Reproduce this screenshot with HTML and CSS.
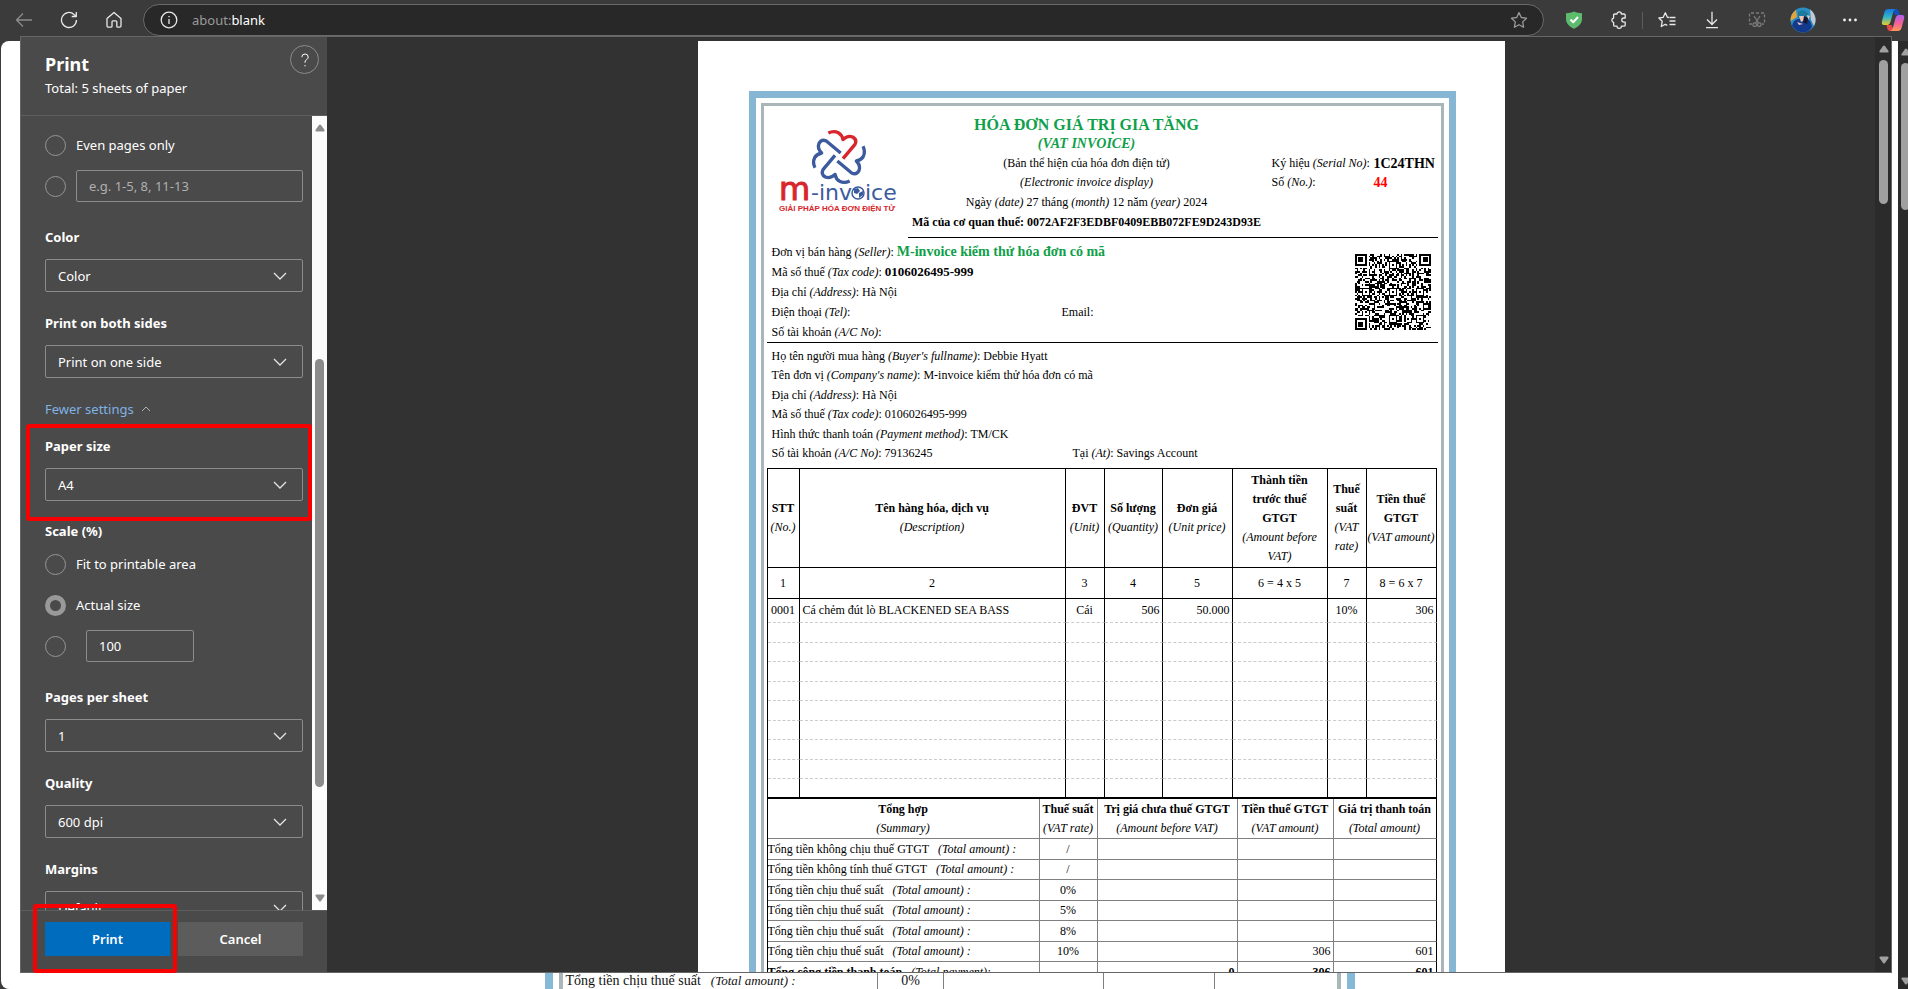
FILE: index.html
```html
<!DOCTYPE html>
<html lang="en">
<head>
<meta charset="utf-8">
<title>about:blank</title>
<link rel="stylesheet" href="styles.css">
</head>
<body>
<header class="toolbar">
  <button class="tool dim" aria-label="Back"><svg width="18" height="16" viewBox="0 0 18 16"><path d="M17 8H1.500M8 1.500 1.500 8 8 14.500"/></svg></button>
  <button class="tool" aria-label="Refresh"><svg width="18" height="18" viewBox="0 0 18 18"><path d="M16.500 9A7.500 7.500 0 1 1 14 3.400L16 5M16.300 1v4.500h-4.600"/></svg></button>
  <button class="tool" aria-label="Home"><svg width="18" height="18" viewBox="0 0 18 18"><path d="M2 7.600 9 1.500l7 6.100v7.200q0 1.400-1.400 1.400h-1.800q-1 0-1-1v-4.400q0-1-1-1H8q-1 0-1 1v4.400q0 1-1 1H3.400Q2 16.200 2 14.800z"/></svg></button>
  <div class="address">
    <svg width="18" height="18" viewBox="0 0 18 18"><circle cx="9" cy="9" r="7.800"/><path d="M9 8v5M9 5v1.200"/></svg>
    <span class="url"><span class="scheme">about:</span>blank</span>
    <button class="star" aria-label="Add to favorites"><svg width="18" height="18" viewBox="0 0 18 18"><path d="m9 1.500 2.300 5 5.200.700-3.800 3.700.900 5.300L9 13.700l-4.600 2.500.900-5.300L1.500 7.200l5.200-.700z"/></svg></button>
  </div>
  <button class="tool" aria-label="Protection"><svg width="18" height="18" viewBox="0 0 18 18"><path class="shield" d="M9 .500C6.500 1.600 4 2 1 2.300V8c0 4.500 3.500 7.700 8 9.700 4.500-2 8-5.200 8-9.700V2.300C14 2 11.500 1.600 9 .500z"/><path class="tick" d="m5.500 8.500 2.700 2.700L13 6"/></svg></button>
  <button class="tool" aria-label="Extensions"><svg width="18" height="18" viewBox="0 0 18 18"><path d="M4.800 3H7a2.200 2.200 0 0 1 4.400 0H14q1.200 0 1.200 1.200V7h-1.300a2 2 0 0 0 0 4.200h1.300V14q0 1.200-1.200 1.200h-2.600a2.200 2.200 0 0 1-4.400 0H4.800q-1.200 0-1.200-1.200v-2.700a2.200 2.200 0 0 1 0-4.300V4.200Q3.600 3 4.800 3z"/></svg></button>
  <span class="divider"></span>
  <button class="tool" aria-label="Favorites"><svg width="18" height="18" viewBox="0 0 18 18"><path d="M11 6.500 9.400 6.300 7.300 1.800 5.200 6.300.9 7l3.300 3.300-.9 5.200 4-2.200 2 1M11.500 6.500h6M11.500 10h6M11.500 13.500h6"/></svg></button>
  <button class="tool" aria-label="Downloads"><svg width="18" height="18" viewBox="0 0 18 18"><path d="M9 .800v12.400M4 8.500l5 5 5-5M3 16.700h12"/></svg></button>
  <button class="tool faint" aria-label="Screenshot"><svg width="18" height="18" viewBox="0 0 18 18"><path stroke-dasharray="3 2" d="M4 13H1.500V2h15v11H14"/><path d="m6 5 4.500 7M12 5l-4.500 7"/><circle cx="6.700" cy="13.700" r="1.800"/><circle cx="11.300" cy="13.700" r="1.800"/></svg></button>
  <button class="tool profile" aria-label="Profile"><svg width="26" height="26" viewBox="0 0 26 26"><circle class="av-bg" cx="13" cy="13" r="12.500"/><path class="av-amber" d="M.600 14A12.500 12.500 0 0 1 6 3l1 7z"/><path class="av-grey" d="M20 2.600A12.500 12.500 0 0 1 24 19l-3-6z"/><path class="av-coat" d="M2 19q1-6 6-7l8-1q5 2 6 9-3.500 5.500-9 5.500T2 19z"/><path class="av-hair" d="M8 5q5-4 10 1l1 4-11 1z"/><path class="av-skin" d="M9 9h5l1 4-4 2zM7 15l6 2-4 1zM17 8l3 1-2 4z"/><path class="av-dark" d="M14 9l4 2-1 6-4-2z"/></svg></button>
  <button class="tool" aria-label="Settings and more"><svg width="18" height="18" viewBox="0 0 18 18"><g class="dots"><circle cx="3.500" cy="9" r="1.400"/><circle cx="9" cy="9" r="1.400"/><circle cx="14.500" cy="9" r="1.400"/></g></svg></button>
  <button class="tool copilot" aria-label="Copilot"><svg width="24" height="24" viewBox="0 0 24 24">
    <defs>
      <linearGradient id="cpA" x1="0" y1="0" x2="0" y2="1"><stop offset="0" stop-color="#1878e0"/><stop offset=".5" stop-color="#2fb5c8"/><stop offset="1" stop-color="#e8cf2a"/></linearGradient>
      <linearGradient id="cpB" x1="0" y1="0" x2="0" y2="1"><stop offset="0" stop-color="#b060f0"/><stop offset=".5" stop-color="#f0609a"/><stop offset="1" stop-color="#ff9858"/></linearGradient>
    </defs>
    <path fill="#1450b8" d="M11 1h4q2 0 2.700 2l1.300 4h-5z"/>
    <path fill="url(#cpA)" d="M7 1h8q-2 0-2.800 3L10 12q-1 5-4 5H3q-3 0-2-4L3.500 4Q4.500 1 7 1z"/>
    <path fill="#e84848" d="M13 23H9q-2 0-2.600-2L5.500 17h5z"/>
    <path fill="url(#cpB)" d="M17 23H9q2 0 2.800-3L14 12q1-5 4-5h3q3 0 2 4l-2.500 9q-1 3-3.500 3z"/>
  </svg></button>
</header>

<main class="viewport">
  <div class="backpage">
    <div class="backdoc">
      <table class="backtable">
        <colgroup><col class="b1"><col class="b2"><col class="b3"><col class="b4"><col></colgroup>
        <tr><td>Tổng tiền chịu thuế suất <i>&nbsp;&nbsp;(Total amount) :</i></td><td class="mid">0%</td><td></td><td></td><td></td></tr>
      </table>
    </div>
  </div>
  <div class="scrollbar page-scroll">
    <svg width="10" height="8" viewBox="0 0 10 8"><path d="M4 1q1-1 2 0l3.500 5q.5 1.500-1 1.500h-7Q0 7.500.5 6z"/></svg>
    <span class="thumb"></span>
    <svg class="end" width="10" height="8" viewBox="0 0 10 8"><path d="M4 7q1 1 2 0l3.500-5Q10 .500 8.500.500h-7Q0 .500.500 2z"/></svg>
  </div>
</main>

<div class="dialog" role="dialog" aria-label="Print">
  <form class="sidebar">
    <div class="side-head">
      <div><h1>Print</h1><p>Total: 5 sheets of paper</p></div>
      <button type="button" class="help" aria-label="Help"><svg width="10" height="14" viewBox="0 0 10 14"><path d="M1.800 4.200Q1.800 1 5 1t3.200 3q0 1.500-1.700 2.700T5 9.300v.5M5 12v1.300"/></svg></button>
    </div>
    <div class="side-main">
      <div class="settings">
        <div class="choices">
          <div class="choice"><input type="radio" name="pages" id="even"><label for="even">Even pages only</label></div>
          <div class="choice"><input type="radio" name="pages" id="range" aria-label="Page range"><input class="box grow" type="text" aria-label="Pages" placeholder="e.g. 1-5, 8, 11-13"></div>
        </div>
        <div class="field after-choices"><label for="color">Color</label>
          <div class="pick"><select id="color"><option>Color</option></select><svg width="14" height="8" viewBox="0 0 14 8"><path d="m1 1 6 6 6-6"/></svg></div></div>
        <div class="field"><label for="sides">Print on both sides</label>
          <div class="pick"><select id="sides"><option>Print on one side</option></select><svg width="14" height="8" viewBox="0 0 14 8"><path d="m1 1 6 6 6-6"/></svg></div></div>
        <button type="button" class="fewer">Fewer settings <svg width="10" height="6" viewBox="0 0 10 6"><path d="m1 5 4-4 4 4"/></svg></button>
        <div class="field paper"><label for="paper">Paper size</label>
          <div class="pick"><select id="paper"><option>A4</option></select><svg width="14" height="8" viewBox="0 0 14 8"><path d="m1 1 6 6 6-6"/></svg></div>
          <span class="mark mark-paper"></span></div>
        <fieldset class="field scale">
          <legend>Scale (%)</legend>
          <div class="choices">
            <div class="choice"><input type="radio" name="scale" id="fit"><label for="fit">Fit to printable area</label></div>
            <div class="choice"><input type="radio" name="scale" id="actual" checked><label for="actual">Actual size</label></div>
            <div class="choice"><input type="radio" name="scale" id="custom" aria-label="Custom scale"><input class="box percent" type="text" aria-label="Scale percent" value="100"></div>
          </div>
        </fieldset>
        <div class="field after-choices"><label for="pps">Pages per sheet</label>
          <div class="pick"><select id="pps"><option>1</option></select><svg width="14" height="8" viewBox="0 0 14 8"><path d="m1 1 6 6 6-6"/></svg></div></div>
        <div class="field"><label for="quality">Quality</label>
          <div class="pick"><select id="quality"><option>600 dpi</option></select><svg width="14" height="8" viewBox="0 0 14 8"><path d="m1 1 6 6 6-6"/></svg></div></div>
        <div class="field"><label for="margins">Margins</label>
          <div class="pick"><select id="margins"><option>Default</option></select><svg width="14" height="8" viewBox="0 0 14 8"><path d="m1 1 6 6 6-6"/></svg></div></div>
      </div>
      <div class="scrollbar side-scroll">
        <svg width="10" height="8" viewBox="0 0 10 8"><path d="M4 1q1-1 2 0l3.500 5q.5 1.500-1 1.500h-7Q0 7.500.5 6z"/></svg>
        <span class="thumb"></span>
        <svg class="end" width="10" height="8" viewBox="0 0 10 8"><path d="M4 7q1 1 2 0l3.500-5Q10 .500 8.500.500h-7Q0 .500.500 2z"/></svg>
      </div>
    </div>
    <div class="side-foot">
      <div class="act"><button type="button" class="primary">Print</button><span class="mark mark-print"></span></div>
      <div class="act"><button type="button">Cancel</button></div>
    </div>
  </form>

  <section class="preview">
    <article class="sheet">
      <div class="frame"><div class="frame-in">
        <div class="inv-head">
          <div class="logo">
            <svg width="122" height="84" viewBox="0 0 122 84" role="img" aria-label="m-invoice">
              <g transform="translate(60 28) scale(.3333)" fill="none" stroke-width="10" stroke-linejoin="round">
                <path stroke="#d8262c" d="M-32-72Q-16-80-2-73 9-67 12-52 26-66 41-60 55-52 48-38L12 5"/>
                <path stroke="#3c5a9e" transform="rotate(-90)" d="M-32-72Q-16-80-2-73 9-67 12-52 26-66 41-60 55-52 48-38L12 5"/>
                <path stroke="#3c5a9e" transform="rotate(180)" d="M-32-72Q-16-80-2-73 9-67 12-52 26-66 41-60 55-52 48-38L12 5"/>
                <path stroke="#3c5a9e" transform="rotate(90)" d="M-32-72Q-16-80-2-73 9-67 12-52 26-66 41-60 55-52 48-38L12 5"/>
              </g>
              <text class="lg-m" x="0" y="71">m</text>
              <text class="lg-t" x="32" y="71">-inv</text>
              <circle cx="79" cy="64" r="6" fill="#fff" stroke="#3c5a9e" stroke-width="1.500"/>
              <path fill="#3c5a9e" d="M75 60l4-1 2 3-3 3-3-1zM80 64l4-2v4l-4 3z"/>
              <text class="lg-t" x="86" y="71">ice</text>
              <text class="lg-s" x="0" y="82">GIẢI PHÁP HÓA ĐƠN ĐIỆN TỬ</text>
            </svg>
          </div>
          <div class="inv-title">
            <h2>HÓA ĐƠN GIÁ TRỊ GIA TĂNG</h2>
            <p class="sub">(VAT INVOICE)</p>
            <p>(Bản thể hiện của hóa đơn điện tử)</p>
            <p><i>(Electronic invoice display)</i></p>
            <p>Ngày <i>(date)</i> 27 tháng <i>(month)</i> 12 năm <i>(year)</i> 2024</p>
            <p class="code">Mã của cơ quan thuế: 0072AF2F3EDBF0409EBB072FE9D243D93E</p>
          </div>
          <dl class="serial">
            <dt>Ký hiệu <i>(Serial No)</i>:</dt><dd>1C24THN</dd>
            <dt>Số <i>(No.)</i>:</dt><dd class="no">44</dd>
          </dl>
        </div>
        <div class="seller">
          <div class="rows">
            <p>Đơn vị bán hàng <i>(Seller)</i>: <b class="name">M-invoice kiểm thử hóa đơn có mã</b></p>
            <p>Mã số thuế <i>(Tax code)</i>: <b class="tax">0106026495-999</b></p>
            <p>Địa chỉ <i>(Address)</i>: Hà Nội</p>
            <p class="pair"><span>Điện thoại <i>(Tel)</i>:</span><span>Email:</span></p>
            <p>Số tài khoản <i>(A/C No)</i>:</p>
          </div>
          <svg class="qr" id="qr" width="76" height="76" viewBox="0 0 45 45" shape-rendering="crispEdges" role="img" aria-label="QR code"><path id="qr-path"/></svg>
        </div>
        <div class="buyer">
          <p>Họ tên người mua hàng <i>(Buyer's fullname)</i>: Debbie Hyatt</p>
          <p>Tên đơn vị <i>(Company's name)</i>: M-invoice kiểm thử hóa đơn có mã</p>
          <p>Địa chỉ <i>(Address)</i>: Hà Nội</p>
          <p>Mã số thuế <i>(Tax code)</i>: 0106026495-999</p>
          <p>Hình thức thanh toán <i>(Payment method)</i>: TM/CK</p>
          <p class="pair at"><span>Số tài khoản <i>(A/C No)</i>: 79136245</span><span>Tại <i>(At)</i>: Savings Account</span></p>
        </div>
        <table class="items">
          <colgroup><col class="c1"><col><col class="c3"><col class="c4"><col class="c5"><col class="c6"><col class="c3"><col class="c5"></colgroup>
          <thead>
            <tr class="names"><th>STT<br><i>(No.)</i></th><th>Tên hàng hóa, dịch vụ<br><i>(Description)</i></th><th>ĐVT<br><i>(Unit)</i></th><th>Số lượng<br><i>(Quantity)</i></th><th>Đơn giá<br><i>(Unit price)</i></th><th>Thành tiền<br>trước thuế<br>GTGT<br><i>(Amount before<br>VAT)</i></th><th>Thuế<br>suất<br><i>(VAT<br>rate)</i></th><th>Tiền thuế<br>GTGT<br><i>(VAT amount)</i></th></tr>
            <tr class="nums"><td>1</td><td>2</td><td>3</td><td>4</td><td>5</td><td>6 = 4 x 5</td><td>7</td><td>8 = 6 x 7</td></tr>
          </thead>
          <tbody>
            <tr class="first"><td>0001</td><td class="left">Cá chẻm đút lò BLACKENED SEA BASS</td><td>Cái</td><td class="right">506</td><td class="right">50.000</td><td></td><td>10%</td><td class="right">306</td></tr>
            <tr><td></td><td></td><td></td><td></td><td></td><td></td><td></td><td></td></tr>
            <tr><td></td><td></td><td></td><td></td><td></td><td></td><td></td><td></td></tr>
            <tr><td></td><td></td><td></td><td></td><td></td><td></td><td></td><td></td></tr>
            <tr><td></td><td></td><td></td><td></td><td></td><td></td><td></td><td></td></tr>
            <tr><td></td><td></td><td></td><td></td><td></td><td></td><td></td><td></td></tr>
            <tr><td></td><td></td><td></td><td></td><td></td><td></td><td></td><td></td></tr>
            <tr><td></td><td></td><td></td><td></td><td></td><td></td><td></td><td></td></tr>
            <tr><td></td><td></td><td></td><td></td><td></td><td></td><td></td><td></td></tr>
            <tr class="last"><td></td><td></td><td></td><td></td><td></td><td></td><td></td><td></td></tr>
          </tbody>
        </table>
        <table class="totals">
          <colgroup><col><col class="t2"><col class="t3"><col class="t4"><col class="t5"></colgroup>
          <thead><tr><th>Tổng hợp<br><i>(Summary)</i></th><th>Thuế suất<br><i>(VAT rate)</i></th><th>Trị giá chưa thuế GTGT<br><i>(Amount before VAT)</i></th><th>Tiền thuế GTGT<br><i>(VAT amount)</i></th><th>Giá trị thanh toán<br><i>(Total amount)</i></th></tr></thead>
          <tbody>
            <tr><td>Tổng tiền không chịu thuế GTGT <i>&nbsp;&nbsp;(Total amount) :</i></td><td>/</td><td></td><td></td><td></td></tr>
            <tr><td>Tổng tiền không tính thuế GTGT <i>&nbsp;&nbsp;(Total amount) :</i></td><td>/</td><td></td><td></td><td></td></tr>
            <tr><td>Tổng tiền chịu thuế suất <i>&nbsp;&nbsp;(Total amount) :</i></td><td>0%</td><td></td><td></td><td></td></tr>
            <tr><td>Tổng tiền chịu thuế suất <i>&nbsp;&nbsp;(Total amount) :</i></td><td>5%</td><td></td><td></td><td></td></tr>
            <tr><td>Tổng tiền chịu thuế suất <i>&nbsp;&nbsp;(Total amount) :</i></td><td>8%</td><td></td><td></td><td></td></tr>
            <tr><td>Tổng tiền chịu thuế suất <i>&nbsp;&nbsp;(Total amount) :</i></td><td>10%</td><td></td><td>306</td><td>601</td></tr>
            <tr class="sum"><td>Tổng cộng tiền thanh toán <i>&nbsp;&nbsp;(Total payment):</i></td><td></td><td>0</td><td>306</td><td>601</td></tr>
          </tbody>
        </table>
      </div></div>
    </article>
    <div class="scrollbar view-scroll">
      <svg width="10" height="8" viewBox="0 0 10 8"><path d="M4 1q1-1 2 0l3.500 5q.5 1.500-1 1.500h-7Q0 7.500.5 6z"/></svg>
      <span class="thumb"></span>
      <svg class="end" width="10" height="8" viewBox="0 0 10 8"><path d="M4 7q1 1 2 0l3.500-5Q10 .500 8.500.500h-7Q0 .500.500 2z"/></svg>
    </div>
  </section>
</div>
<script src="qr.js"></script>
</body>
</html>
```

FILE: styles.css
```css
* { box-sizing: border-box; }
body {
  margin: 0;
  height: 100vh;
  display: flex;
  flex-direction: column;
  overflow: hidden;
  background: #3b3b3b;
  color: #fff;
  font: 13px/20px "Noto Sans", "Open Sans", sans-serif;
}
h1, h2, p, dl, dd { margin: 0; }
button, input, select { font: inherit; color: inherit; }
button { border: 0; background: none; padding: 0; }
svg { display: block; flex: none; }

/* Browser toolbar */
.toolbar {
  display: flex;
  align-items: center;
  flex: none;
  height: 41px;
  padding: 4px 3px 5px 1px;
}
.toolbar svg { fill: none; stroke: #e8e8e8; stroke-width: 1.300; stroke-linejoin: round; }
.tool {
  width: 45px;
  height: 32px;
  display: flex;
  align-items: center;
  justify-content: center;
}
.toolbar .dim svg { stroke: #8c8c8c; }
.toolbar .faint svg { stroke: #7c7c7c; }
.profile { width: 48px; }
.copilot { width: 33px; justify-content: flex-end; }
.toolbar .copilot svg, .toolbar .profile svg { stroke: none; }
.divider { width: 1px; height: 17px; margin: 0 1px; background: #5c5c5c; }
.address {
  flex: 1;
  height: 32px;
  margin: 0 7px;
  padding: 0 15px 0 16px;
  display: flex;
  align-items: center;
  gap: 14px;
  border: 1px solid #6a6a6a;
  border-radius: 16px;
  background: #282828;
}
.url { flex: 1; }
.scheme { color: #9a9a9a; }
.star svg { stroke: #9a9a9a; }
.toolbar .shield { fill: #5dbb6e; stroke: none; }
.toolbar .tick { stroke: #fff; stroke-width: 2; }
.toolbar .dots { fill: #f0f0f0; stroke: none; }
.av-bg { fill: #2b8fc4; }
.av-amber { fill: #e5a53c; }
.av-grey { fill: #c2c8d0; }
.av-coat { fill: #12398c; }
.av-hair { fill: #1d7b9f; }
.av-skin { fill: #e9c3b4; }
.av-dark { fill: #14182c; }

/* Page behind the dialog */
.viewport { flex: 1; display: flex; min-height: 0; padding-left: 1px; }
.backpage {
  flex: 1;
  display: flex;
  flex-direction: column;
  justify-content: flex-end;
  align-items: center;
  background: #fff;
  border-radius: 8px 0 0 8px;
  color: #111;
}
.backdoc {
  width: 810px;
  height: 19px;
  padding: 0 6px;
  overflow: hidden;
  border: solid #86b8d8;
  border-width: 0 8px;
}
.backtable {
  width: 100%;
  table-layout: fixed;
  border-collapse: collapse;
  font: 14px/22px "Liberation Serif", serif;
  border: solid #a9b7ba;
  border-width: 0 4px;
}
.backtable td { padding: 0; border-right: 1px solid #808080; }
.backtable td:first-child { padding-left: 3px; }
.backtable i { font-size: 13px; }
.backtable .mid { text-align: center; }
.b1 { width: 317px; }
.b2 { width: 66px; }
.b3 { width: 160px; }
.b4 { width: 111px; }

/* Scroll bars */
.scrollbar { flex: none; display: flex; flex-direction: column; fill: #a0a0a0; background: #2b2b2b; }
.scrollbar .thumb { width: 9px; border-radius: 5px; background: #a0a0a0; }
.scrollbar .end { margin-top: auto; }
.page-scroll { width: 10px; padding: 7px 0 4px 3px; overflow: hidden; }
.page-scroll .thumb { height: 147px; margin-top: 7px; }
.view-scroll { width: 16px; padding: 8px 3px 8px 4px; margin-left: auto; }
.view-scroll .thumb { height: 144px; margin-top: 7px; }
.side-scroll { width: 15px; padding: 8px 3px; background: #fcfcfc; fill: #8b8b8b; }
.side-scroll .thumb { height: 55%; margin-top: 227px; background: #8b8b8b; }

/* Print dialog */
.dialog {
  position: absolute;
  inset: 36px 16px 16px 20px;
  display: flex;
  border: 1px solid #666;
  background: #323232;
}
.sidebar {
  flex: none;
  width: 306px;
  display: flex;
  flex-direction: column;
  background: #4a4a4a;
}
.side-head {
  display: flex;
  justify-content: space-between;
  align-items: flex-start;
  height: 79px;
  padding: 8px 8px 0 24px;
  border-bottom: 1px solid #5e5e5e;
}
.side-head h1 { margin-top: 6px; font-size: 18px; line-height: 26px; font-weight: 700; }
.side-head p { line-height: 22px; }
.help {
  width: 29px;
  height: 29px;
  display: flex;
  align-items: center;
  justify-content: center;
  border: 1px solid #8c8c8c;
  border-radius: 50%;
}
.help svg { fill: none; stroke: #fff; }
.side-main { flex: 1; display: flex; min-height: 0; overflow: hidden; }
.settings { flex: 1; padding: 13px 9px 0 24px; }
.choices { display: flex; flex-direction: column; gap: 9px; }
.choice { display: flex; align-items: center; gap: 10px; height: 32px; }
.choice input[type="radio"] {
  appearance: none;
  flex: none;
  width: 21px;
  height: 21px;
  margin: 0;
  border: 1px solid #969696;
  border-radius: 50%;
}
.choice input[type="radio"]:checked { border-width: 5px; border-color: #999; }
.box {
  min-width: 0;
  height: 32px;
  padding: 0 12px;
  border: 1px solid #8c8c8c;
  border-radius: 2px;
  background: none;
}
.box::placeholder { color: #b0b0b0; }
.grow { flex: 1; }
.percent { width: 108px; margin-left: 10px; }
.field { display: flex; flex-direction: column; gap: 12px; margin: 21px 0 0; padding: 0; border: 0; }
.field > label, .field legend { padding: 0; font-weight: 700; }
.after-choices { margin-top: 25px; }
.pick { display: flex; align-items: center; }
.pick select {
  appearance: none;
  width: 100%;
  height: 33px;
  padding: 0 12px;
  border: 1px solid #8c8c8c;
  border-radius: 2px;
  background: none;
}
.pick svg { margin: 0 16px 0 -30px; fill: none; stroke: #e4e4e4; stroke-width: 1.300; }
.fewer { display: flex; align-items: center; gap: 7px; margin-top: 21px; color: #7fb2e5; }
.fewer svg { fill: none; stroke: #a8b4c0; }
.paper { position: relative; margin-top: 17px; }
.scale { display: block; margin-top: 20px; }
.scale .choices { margin-top: 7px; }
.mark { position: absolute; border: 4px solid #f90000; border-radius: 3px; pointer-events: none; }
.mark-paper { inset: -12px -9px -20px -19px; }
.mark-print { inset: -18px -7px -17px -12px; }
.side-foot {
  display: flex;
  gap: 8px;
  padding: 11px 24px 16px;
  border-top: 1px solid #5e5e5e;
}
.act { flex: 1; position: relative; display: flex; }
.act button { flex: 1; height: 34px; background: #5c5c5c; font-weight: 600; }
.act .primary { background: #006cbe; }

/* Preview and invoice */
.preview { flex: 1; display: flex; min-width: 0; }
.sheet {
  width: 807px;
  margin: 4px 0 0 auto;
  padding: 50px 49px 0 51px;
  overflow: hidden;
  background: #fff;
  color: #000;
  font: 12px/20px "Liberation Serif", "Times New Roman", serif;
}
.sheet i { font-weight: 400; }
.frame { padding: 5px 5px 0; border: 7px solid #86b6d4; border-bottom: 0; }
.frame-in { padding: 9px 3px 0; border: 3px solid #a9b5b9; border-bottom: 0; height: 900px; }
.inv-head { display: grid; grid-template-columns: 141px 1fr 170px; }
.logo { padding: 14px 0 0 12px; }
.lg-m { font: 32px "DejaVu Sans", sans-serif; fill: #d8262c; stroke: #d8262c; }
.lg-t { font: 22px "DejaVu Sans", sans-serif; fill: #3c5a9e; }
.lg-s { font: 700 8px "Liberation Sans", sans-serif; fill: #d8262c; }
.inv-title {
  grid-column: 2 / 4;
  grid-row: 1;
  display: grid;
  grid-template-rows: 19px 20px 19px 20px 20px 19px;
  padding-bottom: 5px;
  border-bottom: 1px solid #000;
  text-align: center;
}
.inv-title > * { margin: 0 172px 0 0; line-height: 19px; }
.inv-title h2 { font-size: 16px; color: #0fa04a; white-space: nowrap; }
.inv-title .sub { font-size: 14px; font-weight: 700; font-style: italic; color: #0fa04a; }
.inv-title .code { font-weight: 700; white-space: nowrap; }
.serial {
  grid-column: 3;
  grid-row: 1;
  display: grid;
  grid-template-columns: 102px 1fr;
  grid-auto-rows: 19px;
  align-content: start;
  padding: 39px 0 0 4px;
  line-height: 19px;
}
.serial dt, .serial dd { white-space: nowrap; }
.serial dd { font-size: 14px; font-weight: 700; }
.serial .no { color: #f00; }
.seller {
  display: flex;
  align-items: flex-start;
  justify-content: space-between;
  padding: 4px 7px 0 5px;
  border-bottom: 1px solid #000;
}
.rows { flex: 1; }
.name { font-size: 14px; color: #0fa04a; }
.tax { font-size: 13px; }
.seller .qr { margin-top: 12px; }
.pair { display: grid; grid-template-columns: 290px 1fr; }
.at { grid-template-columns: 301px 1fr; }
.buyer { padding: 3px 5px 5px; }
.buyer p:nth-child(even) { line-height: 19px; }
.sheet table { width: 670px; table-layout: fixed; border-collapse: separate; border-spacing: 0; border-left: 1px solid #000; line-height: 19px; }
.sheet td, .sheet th { padding: 0; text-align: center; }
.items td, .items th { border-right: 1px solid #000; white-space: nowrap; }
.items thead tr > * { border-bottom: 1px solid #000; }
.items { border-top: 1px solid #000; }
.names { height: 99px; }
.nums { height: 31px; }
.items tbody td { height: 20px; border-bottom: 1px dashed #c9cdc9; }
.items tbody tr:nth-child(odd) td { height: 19px; }
.items tbody tr.first:nth-child(odd) td { height: 24px; }
.items tbody .last td { border-bottom: 2px solid #000; }
.sheet .items .left { text-align: left; padding-left: 3px; }
.sheet .items .right { text-align: right; padding-right: 2px; }
.c1 { width: 32px; }
.c3 { width: 39px; }
.c4 { width: 58px; }
.c5 { width: 70px; }
.c6 { width: 95px; }
.totals th, .totals td { border-right: 1px solid #808080; border-bottom: 1px solid #808080; }
.totals tr > :last-child { border-right-color: #000; }
.totals th { height: 40px; white-space: nowrap; }
.totals tbody td { height: 20px; }
.totals tbody tr:nth-child(odd) td { height: 21px; }
.sheet .totals tbody td:first-child { text-align: left; }
.sheet .totals tbody td:nth-child(n+3) { text-align: right; padding-right: 2px; }
.totals .sum { font-weight: 700; }
.t2 { width: 58px; }
.t3 { width: 140px; }
.t4 { width: 96px; }
.t5 { width: 103px; }
```

FILE: qr.js
```js
// Fills the 45 x 45 module code: finders, timing, alignment marks and data.
(function () {
  var n = 45, seed = 20241227, d = "";
  var finders = [[0, 0], [38, 0], [0, 38]];
  var marks = [[22, 6], [6, 22], [22, 22], [38, 22], [22, 38], [38, 38]];
  function random() {
    seed = (seed * 1103515245 + 12345) % 2147483648;
    return seed / 2147483648;
  }
  function dark(x, y) {
    var i, r, bit = random() < 0.5;
    for (i = 0; i < 3; i++) {
      r = Math.max(Math.abs(x - finders[i][0] - 3), Math.abs(y - finders[i][1] - 3));
      if (r <= 4) return r < 2 || r === 3;
    }
    for (i = 0; i < 6; i++) {
      r = Math.max(Math.abs(x - marks[i][0]), Math.abs(y - marks[i][1]));
      if (r <= 2) return r !== 1;
    }
    if (x === 6) return y % 2 === 0;
    if (y === 6) return x % 2 === 0;
    return bit;
  }
  for (var y = 0; y < n; y++)
    for (var x = 0; x < n; x++)
      if (dark(x, y)) d += "M" + x + " " + y + "h1v1h-1z";
  document.getElementById("qr-path").setAttribute("d", d);
})();
```
